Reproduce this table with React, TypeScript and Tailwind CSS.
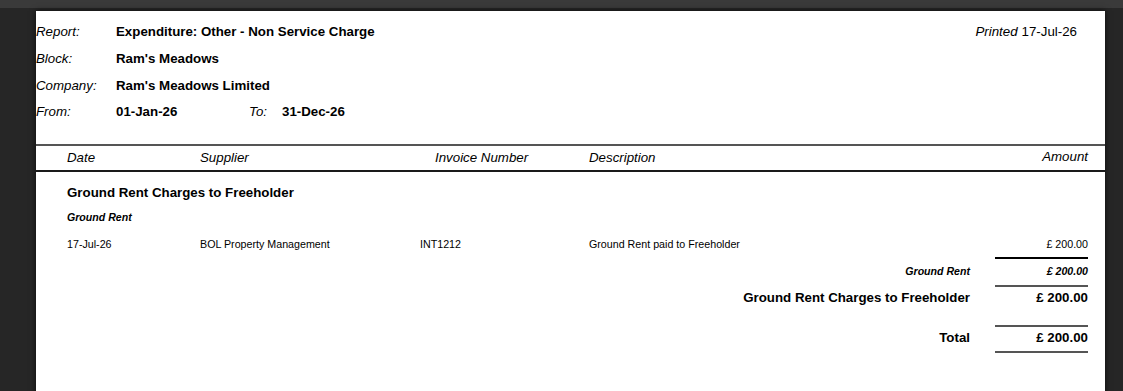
import React from "react";

const font = { fontFamily: '"Liberation Sans", Arial, Helvetica, sans-serif' };

function HeaderRow({ label, value, children }: { label: string; value: string; children?: React.ReactNode }) {
  return (
    <div className="flex h-[26.67px] items-center">
      <div className="w-[80px] italic">{label}</div>
      <div className="font-bold">{value}</div>
      {children}
    </div>
  );
}

export default function App() {
  return (
    <div className="w-[1123px] h-[391px] overflow-hidden bg-[#262626] text-black" style={font}>
      <div className="h-[8px] bg-[#3a3a3a]" />
      <div className="ml-[36px] mt-[3px] w-[1069px] h-[400px] bg-white shadow-[0_0_6px_rgba(0,0,0,0.7)]">
        {/* Report header */}
        <div className="h-[133px] pt-[8px] text-[13.3px] flex">
          <div className="flex-1">
            <HeaderRow label="Report:" value="Expenditure: Other - Non Service Charge" />
            <HeaderRow label="Block:" value="Ram's Meadows" />
            <HeaderRow label="Company:" value="Ram's Meadows Limited" />
            <div className="flex h-[26.67px] items-center">
              <div className="w-[80px] italic">From:</div>
              <div className="w-[133px] font-bold">01-Jan-26</div>
              <div className="w-[33px] italic">To:</div>
              <div className="font-bold">31-Dec-26</div>
            </div>
          </div>
          <div className="pr-[28px]">
            <div className="flex h-[26.67px] items-center">
              <span className="italic">Printed</span>
              <span className="ml-[4px]">17-Jul-26</span>
            </div>
          </div>
        </div>
        <div className="h-[2px] bg-[#555555]" />
        {/* Column headers */}
        <div className="flex h-[24px] items-center italic text-[13.3px] pl-[31px] pr-[17px]">
          <div className="w-[133px]">Date</div>
          <div className="w-[235px]">Supplier</div>
          <div className="w-[154px]">Invoice Number</div>
          <div className="flex-1">Description</div>
          <div className="mb-[3px]">Amount</div>
        </div>
        <div className="h-[2px] bg-[#1a1a1a]" />

        {/* Body */}
        <div className="pl-[31px] pr-[17px]">
          <div className="mt-[13px] h-[16px] leading-[16px] font-bold text-[13.3px]">
            Ground Rent Charges to Freeholder
          </div>
          <div className="mt-[8px] h-[16px] leading-[16px] font-bold italic text-[10.6px]">Ground Rent</div>
          <div className="mt-[11px] flex h-[16px] items-center text-[10.7px]">
            <div className="w-[133px]">17-Jul-26</div>
            <div className="w-[220px]">BOL Property Management</div>
            <div className="w-[169px]">INT1212</div>
            <div className="flex-1">Ground Rent paid to Freeholder</div>
            <div>£ 200.00</div>
          </div>
          <div className="mt-[5px] ml-auto w-[93px] h-[1.5px] bg-black" />
          <div className="mt-[5px] flex h-[16px] items-center justify-end font-bold italic text-[10.6px]">
            <div>Ground Rent</div>
            <div className="w-[118px] text-right">£ 200.00</div>
          </div>
          <div className="mt-[5px] ml-auto w-[93px] h-[2px] bg-[#555555]" />
          <div className="mt-[3px] flex h-[16px] items-center justify-end font-bold text-[13.3px]">
            <div>Ground Rent Charges to Freeholder</div>
            <div className="w-[118px] text-right">£ 200.00</div>
          </div>
          <div className="mt-[19px] ml-auto w-[93px] h-[2px] bg-[#555555]" />
          <div className="mt-[3px] flex h-[16px] items-center justify-end font-bold text-[13.3px]">
            <div>Total</div>
            <div className="w-[118px] text-right">£ 200.00</div>
          </div>
          <div className="mt-[5px] ml-auto w-[93px] h-[2px] bg-[#555555]" />
        </div>
      </div>
    </div>
  );
}
